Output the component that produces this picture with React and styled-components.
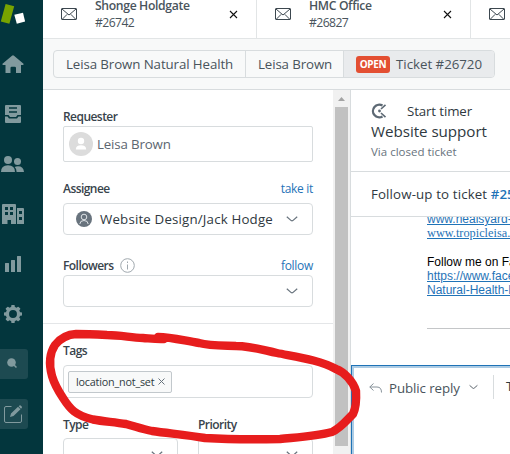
import React from "react";
import styled, { createGlobalStyle } from "styled-components";

const Global = createGlobalStyle`
  * { box-sizing: border-box; }
  html, body { margin: 0; height: 100%; overflow: hidden; background: #fff; }
  body { font-family: "Open Sans", "Noto Sans", sans-serif; color: #2f3941; }
`;

const Screen = styled.div`
  position: relative;
  display: flex;
  width: 510px;
  height: 454px;
  overflow: hidden;
`;

const Text = styled.span`
  display: block;
  flex: none;
  white-space: pre;
  font-size: ${(p) => p.$size || 13.3}px;
  font-weight: ${(p) => p.$weight || 400};
  line-height: ${(p) => p.$line || 20}px;
  letter-spacing: ${(p) => p.$track || 0}px;
  color: ${(p) => p.$color || "#2f3941"};
`;

/* ---------- sidebar ---------- */
const Sidebar = styled.nav`
  flex: none;
  width: 43px;
  background: #03363d;
`;
const NavIcon = styled.svg`
  display: block;
  width: 28px;
  height: 30px;
  margin-top: ${(p) => p.$gap}px;
  fill: #819a9e;
  background: ${(p) => (p.$boxed ? "#1d4a51" : "transparent")};
  border-radius: 0 3px 3px 0;
`;

/* ---------- top ---------- */
const Main = styled.main`
  flex: none;
  width: 467px;
  display: flex;
  flex-direction: column;
`;
const TabBar = styled.div`
  display: flex;
  flex: none;
  height: 39px;
  border-bottom: 1px solid #e2e5e6;
`;
const Tab = styled.div`
  flex: none;
  width: 214px;
  padding: 0 18px;
  display: flex;
  align-items: flex-start;
  border-right: 1px solid #e2e5e6;
`;
const TabLabel = styled.div`
  width: 134px;
  margin: -3px 0 0 18px;
`;
const Envelope = styled.svg`
  flex: none;
  width: 16px;
  height: 12px;
  margin-top: 8px;
  fill: none;
  stroke: #3c474f;
`;
const Close = styled.svg`
  flex: none;
  width: 9px;
  height: 9px;
  margin-top: 10px;
  stroke: #111;
  fill: none;
`;
const CrumbBar = styled.div`
  flex: none;
  height: 51px;
  padding: 11px 10px;
  background: #f8f9f9;
  border-bottom: 1px solid #d8dcde;
`;
const Crumbs = styled.div`
  display: flex;
  width: 442px;
  height: 28px;
  border: 1px solid #d8dcde;
  border-radius: 4px;
  overflow: hidden;
`;
const Crumb = styled.div`
  flex: none;
  display: flex;
  align-items: center;
  width: ${(p) => p.$w}px;
  padding-left: 12px;
  gap: 6px;
  background: ${(p) => (p.$active ? "#e9ebed" : "transparent")};
  border-left: ${(p) => (p.$first ? 0 : 1)}px solid #d8dcde;
`;
const Badge = styled.div`
  display: flex;
  justify-content: center;
  width: 34px;
  height: 17px;
  border-radius: 3px;
  background: #e34f32;
`;

/* ---------- form ---------- */
const Body = styled.div`
  flex: 1;
  display: flex;
  min-height: 0;
`;
const Form = styled.section`
  flex: none;
  width: 290px;
  height: 364px;
  overflow: hidden;
`;
const Group = styled.div`
  padding: ${(p) => p.$top}px 20px ${(p) => p.$bottom || 0}px;
  border-bottom: ${(p) => (p.$rule ? 1 : 0)}px solid #e4e6e8;
`;
const LabelRow = styled.div`
  display: flex;
  height: 20px;
  padding-top: 2px;
  align-items: center;
  margin-top: ${(p) => p.$top || 0}px;
`;
const Link = styled(Text)`
  margin-left: auto;
`;
const Info = styled.svg`
  width: 15px;
  height: 15px;
  margin: -1px 0 0 6px;
  fill: none;
  stroke: #a0a8ae;
`;
const Field = styled.div`
  display: flex;
  align-items: center;
  height: ${(p) => p.$h}px;
  margin-top: ${(p) => p.$top || 0}px;
  padding: 0 ${(p) => p.$right || 14}px 0 ${(p) => p.$left || 5}px;
  border: 1px solid #d8dcde;
  border-radius: ${(p) => p.$radius || 4}px;
`;
const Avatar = styled.svg`
  flex: none;
  width: 24px;
  height: 24px;
  margin-right: 4px;
`;
const Agent = styled.svg`
  flex: none;
  width: 16px;
  height: 16px;
  margin-right: 8px;
`;
const Chevron = styled.svg`
  flex: none;
  width: ${(p) => p.$w || 12}px;
  height: 6px;
  margin-left: auto;
  fill: none;
  stroke: #68737d;
  stroke-width: 1.2;
`;
const Tag = styled.div`
  display: flex;
  align-items: center;
  gap: 4px;
  width: 104px;
  height: 22px;
  margin-left: -1px;
  padding-left: 7px;
  border: 1px solid #c2c8cc;
  border-radius: 2px;
  background: #f8f9f9;
`;
const Remove = styled.svg`
  width: 7px;
  height: 7px;
  stroke: #68737d;
`;
const Pair = styled.div`
  display: grid;
  grid-template-columns: 115px 115px;
  gap: 20px;
  margin-top: 16px;
`;

const Scrollbar = styled.div`
  flex: none;
  display: flex;
  flex-direction: column;
  align-items: center;
  width: 18px;
  padding-right: 1px;
  background: #f1f1f1;
  border-right: 1px solid #d8dcde;
`;
const Arrow = styled.svg`
  width: 7px;
  height: 4px;
  margin: 7px 0 6px;
  fill: #a3a3a3;
`;
const Thumb = styled.div`
  width: 13px;
  height: 339px;
  background: #c1c1c1;
`;

/* ---------- conversation ---------- */
const Conversation = styled.section`
  flex: none;
  width: 159px;
  display: flex;
  flex-direction: column;
  overflow: hidden;
`;
const Heading = styled.header`
  flex: none;
  height: 82px;
  padding: 11px 0 0 20px;
  border-bottom: 1px solid #d8dcde;
`;
const TimerRow = styled.div`
  display: flex;
  align-items: center;
  gap: 20px;
  height: 20px;
`;
const TimerIcon = styled.svg`
  width: 16px;
  height: 16px;
  fill: none;
  stroke: #5d6974;
`;
const FollowUp = styled.div`
  flex: none;
  display: flex;
  height: 45px;
  padding: 12px 0 0 20px;
  border-bottom: 1px solid #d8dcde;
`;
const Message = styled.div`
  flex: none;
  height: 148px;
  padding-left: 76px;
  overflow: hidden;
`;
const Line = styled.div`
  height: 14px;
  margin-top: ${(p) => p.$top || 0}px;
  line-height: 14px;
  font-size: ${(p) => p.$size || 12}px;
  font-family: ${(p) => (p.$serif ? '"Liberation Serif", serif' : '"Liberation Sans", sans-serif')};
  white-space: nowrap;
  color: ${(p) => (p.$link ? "#1f73b7" : "#000")};
  text-decoration: ${(p) => (p.$link ? "underline" : "none")};
`;
const Rule = styled.div`
  height: 1px;
  margin-top: 31px;
  background: #c4c6c8;
`;
const Composer = styled.div`
  flex: none;
  display: flex;
  align-items: flex-start;
  width: 180px;
  height: 110px;
  padding: 9px 0 0 17px;
  border: 1px solid #1f73b7;
  box-shadow: inset 0 0 0 2px #adcce4;
`;
const Reply = styled.svg`
  width: 13px;
  height: 10px;
  margin: 8px 7px 0 0;
  fill: none;
  stroke: #87929a;
`;
const ReplyChevron = styled(Chevron)`
  margin: 9px 0 0 9px;
  stroke: #49545c;
`;
const Divider = styled.div`
  width: 1px;
  height: 24px;
  margin: 0 12px 0 15px;
  background: #d8dcde;
`;

const Annotation = styled.svg`
  position: absolute;
  inset: 0;
  width: 510px;
  height: 454px;
  fill: none;
  stroke: #e71d1d;
  stroke-width: 8.4;
  stroke-linecap: round;
  stroke-linejoin: round;
  pointer-events: none;
`;

const Mail = () => (
  <Envelope viewBox="0 0 16 12">
    <rect x=".5" y=".5" width="15" height="11" rx=".5" />
    <path d="M1 1l7 6 7-6M1.5 11l4.7-4.7M14.5 11L9.8 6.3" />
  </Envelope>
);
const Cross = () => (
  <Close viewBox="0 0 9 9">
    <path d="M1 1l7 7M8 1L1 8" strokeWidth="1.1" />
  </Close>
);
const Down = ({ w = 12 }) => (
  <Chevron $w={w} viewBox="0 0 12 6">
    <path d="M.8 .8L5.2 4.6Q6 5.2 6.8 4.6L11.2 .8" />
  </Chevron>
);
const Label = ({ children }) => (
  <Text $size={12} $weight={600} $track={-0.55} $color="#38434b">{children}</Text>
);
const teeth = [0, 45, 90, 135, 180, 225, 270, 315];

export default function App() {
  return (
    <Screen>
      <Global />
      <Sidebar>
        <NavIcon $gap={0} viewBox="0 0 28 30">
          <path fill="#78a300" d="M5.6 4L14.2 6.2 9.4 23.7.8 21.5z" />
          <path fill="#fff" d="M14.3 14.7L23 12.8 25.1 21.5 16.8 23.8z" />
        </NavIcon>
        <NavIcon $gap={19} viewBox="0 0 28 30">
          <path d="M12 6.7Q13 5.7 14 6.7L23.5 14.7Q24 15.8 23 16H21V24H16V19Q16 17.7 14.7 17.7H11.7Q10.5 17.7 10.5 19V24H5.5V16H3Q2 15.7 2.5 14.7z" />
        </NavIcon>
        <NavIcon $gap={20} viewBox="0 0 28 30">
          <path fillRule="evenodd" d="M6 6H20Q21 6 21 7V16H17.5L16 18H10L8.500 16H5V7Q5 6 6 6zM9 8.200V9.800H17V8.200zM9 12.200V13.800H17V12.200z" />
          <path d="M5 17.500H7.500L9 19.500H17L18.500 17.500H21V23Q21 24 20 24H6Q5 24 5 23z" />
        </NavIcon>
        <NavIcon $gap={20} viewBox="0 0 28 30">
          <circle cx="8" cy="11" r="4" />
          <circle cx="17.500" cy="12.600" r="3.500" />
          <path d="M1 23Q1 16.300 8 16.300T15 23zM16.600 23Q16.500 19.500 14.700 18Q16 17.200 18 17.200Q23.500 17.200 24 23z" />
        </NavIcon>
        <NavIcon $gap={20} viewBox="0 0 28 30">
          <path fillRule="evenodd" d="M3 5H15Q16 5 16 6V25H11V21H7.500V25H2V6Q2 5 3 5zM5 8v3h3V8zM10 8v3h3V8zM5 13v3h3v-3zM10 13v3h3v-3zM17 9H23Q24 9 24 10V25H17zM19 12v3h3v-3zM19 18v3h3v-3z" />
        </NavIcon>
        <NavIcon $gap={20} viewBox="0 0 28 30">
          <path d="M5 14.500q0-.500.500-.500h3q.500 0 .500.500V23H5zM11 11.500q0-.500.500-.500h3q.500 0 .500.500V23H11zM17 7.500q0-.500.500-.500h3q.500 0 .500.500V23H17z" />
        </NavIcon>
        <NavIcon $gap={20} viewBox="0 0 28 30">
          <circle cx="13" cy="15" r="5.600" fill="none" stroke="#819a9e" strokeWidth="3.300" />
          {teeth.map((a) => (
            <rect key={a} x="11.200" y="6" width="3.600" height="3.200" rx=".8" transform={`rotate(${a} 13 15)`} />
          ))}
        </NavIcon>
        <NavIcon $gap={20} $boxed viewBox="0 0 28 30">
          <circle cx="11.500" cy="13.500" r="4.300" />
          <path d="M14 16L16.500 18.500" stroke="#819a9e" strokeWidth="1.500" />
        </NavIcon>
        <NavIcon $gap={20} $boxed viewBox="0 0 28 30">
          <path d="M11.500 7.500H6Q4.500 7.500 4.500 9V22Q4.500 23.500 6 23.500H20Q21.500 23.500 21.500 22V15.500" fill="none" stroke="#819a9e" />
          <path d="M10 18L11 14.500 18 7.800 20.500 10.300 13.500 17zM18.700 7.200L19.500 6.500Q20.200 6 21 6.800L21.700 7.500Q22.300 8.200 21.700 9L21 9.700z" />
        </NavIcon>
      </Sidebar>

      <Main>
        <TabBar>
          <Tab>
            <Mail />
            <TabLabel>
              <Text $size={12.2} $weight={600} $line={18} $track={-0.35} $color="#49545c">Shonge Holdgate</Text>
              <Text $size={12.2} $line={16} $track={-0.6} $color="#49545c">#26742</Text>
            </TabLabel>
            <Cross />
          </Tab>
          <Tab>
            <Mail />
            <TabLabel>
              <Text $size={12.2} $weight={600} $line={18} $track={-0.35} $color="#49545c">HMC Office</Text>
              <Text $size={12.2} $line={16} $track={-0.6} $color="#49545c">#26827</Text>
            </TabLabel>
            <Cross />
          </Tab>
          <Tab>
            <Mail />
          </Tab>
        </TabBar>
        <CrumbBar>
          <Crumbs>
            <Crumb $first $w={191}>
              <Text $track={-0.1} $color="#49545c">Leisa Brown Natural Health</Text>
            </Crumb>
            <Crumb $w={98}>
              <Text $track={-0.12} $color="#49545c">Leisa Brown</Text>
            </Crumb>
            <Crumb $active $w={153}>
              <Badge>
                <Text $size={10} $weight={700} $line={17} $track={-0.4} $color="#fff">OPEN</Text>
              </Badge>
              <Text $track={-0.02} $color="#49545c">Ticket #26720</Text>
            </Crumb>
          </Crumbs>
        </CrumbBar>

        <Body>
          <Form>
            <Group $rule $top={16} $bottom={16}>
              <LabelRow>
                <Label>Requester</Label>
              </LabelRow>
              <Field $h={36} $radius={2}>
                <Avatar viewBox="0 0 24 24">
                  <circle cx="12" cy="12" r="12" fill="#dcdcdc" />
                  <circle cx="12" cy="9" r="3.200" fill="#fff" />
                  <path d="M6.800 17.500Q7 13.300 12 13.300T17.200 17.500z" fill="#fff" />
                </Avatar>
                <Text $line={22} $track={-0.15} $color="#5c6670">Leisa Brown</Text>
              </Field>
              <LabelRow $top={16}>
                <Label>Assignee</Label>
                <Link $size={12} $track={-0.3} $color="#1f73b7">take it</Link>
              </LabelRow>
              <Field $h={32} $top={5} $left={12}>
                <Agent viewBox="0 0 16 16" fill="none" stroke="#dfe3e6">
                  <circle cx="8" cy="8" r="8" fill="#68737d" stroke="none" />
                  <circle cx="8" cy="6" r="2.800" />
                  <path d="M3.800 13Q4 9.500 8 9.500T12.200 13" />
                </Agent>
                <Text $track={0.17}>Website Design/Jack Hodge</Text>
                <Down />
              </Field>
              <LabelRow $top={20}>
                <Label>Followers</Label>
                <Info viewBox="0 0 15 15">
                  <circle cx="7.500" cy="7.500" r="6.800" />
                  <path d="M7.500 6.500V11.500M7.500 3.500V5" />
                </Info>
                <Link $size={12} $track={-0.3} $color="#1f73b7">follow</Link>
              </LabelRow>
              <Field $h={32}>
                <Down />
              </Field>
            </Group>
            <Group $top={16}>
              <LabelRow>
                <Label>Tags</Label>
              </LabelRow>
              <Field $h={33} $top={5}>
                <Tag>
                  <Text $size={10.8} $track={-0.2}>location_not_set</Text>
                  <Remove viewBox="0 0 7 7">
                    <path d="M.5 .5l6 6M6.500 .5l-6 6" />
                  </Remove>
                </Tag>
              </Field>
              <Pair>
                <div>
                  <LabelRow>
                    <Label>Type</Label>
                  </LabelRow>
                  <Field $h={32} $top={4}>
                    <Down />
                  </Field>
                </div>
                <div>
                  <LabelRow>
                    <Label>Priority</Label>
                  </LabelRow>
                  <Field $h={32} $top={4}>
                    <Down />
                  </Field>
                </div>
              </Pair>
            </Group>
          </Form>

          <Scrollbar>
            <Arrow viewBox="0 0 7 4">
              <path d="M3.500 0L7 4H0z" />
            </Arrow>
            <Thumb />
          </Scrollbar>

          <Conversation>
            <Heading>
              <TimerRow>
                <TimerIcon viewBox="0 0 16 16">
                  <path d="M11.500 2.600A6.300 6.300 0 1 0 11.500 13.400" strokeWidth="2.300" />
                  <path d="M10 6L14.500 1.800M10 10L14.500 14.200" strokeWidth="1.600" />
                  <circle cx="8.500" cy="8" r="1.400" fill="#5d6974" stroke="none" />
                </TimerIcon>
                <Text $track={-0.12}>Start timer</Text>
              </TimerRow>
              <Text $size={15.2} $line={20} $track={-0.05}>Website support</Text>
              <Text $size={11.500} $line={21} $track={0} $color="#68737d">Via closed ticket</Text>
            </Heading>
            <FollowUp>
              <Text $track={0.13}>Follow-up to ticket </Text>
              <Text $weight={600} $color="#1f73b7">#25</Text>
            </FollowUp>
            <Message>
              <Line $link $top={-5}>www.healsyard-</Line>
              <Line $link $serif $size={12.3}>www.tropicleisa.co</Line>
              <Line $top={15}>Follow me on Fac</Line>
              <Line $link>https://www.faceb</Line>
              <Line $link>Natural-Health-L</Line>
              <Rule />
            </Message>
            <Composer>
              <Reply viewBox="0 0 13 10">
                <path d="M4.500 .5L.8 4 4.500 7.500M.8 4H8Q12.500 4 12.500 9.500" />
              </Reply>
              <Text $line={26} $track={-0.08} $color="#49545c">Public reply</Text>
              <ReplyChevron $w={9} viewBox="0 0 12 6">
                <path d="M.8 .8L5.200 4.600Q6 5.200 6.800 4.600L11.200 .8" />
              </ReplyChevron>
              <Divider />
              <Text $line={23}>T</Text>
            </Composer>
          </Conversation>
        </Body>
      </Main>

      <Annotation viewBox="0 0 510 454">
        <path d="M164 339C158 339.500 150 338.500 143 338C130 337.500 121 335 107 335C97 334.500 87 334 76 334C66 334.500 59 340 55 345C49 354 49 365 52 376C55 386 59 392 63 398C70 409 75 415 93 419.500C104 421.500 114 422 126 424C137 427 142 429 152 431C170 433.500 187 435 205 438C230 439.500 255 439.500 280 439C300 437 317 436 332 432C341 428 346 421 353 414C356 408 356.500 400 356 391C353 381 344 372 336 369C320 360 297 357 277 353C259 349 250 346 236 346C224 345.500 210 346 199 343C185 341 172 337 158 337" />
      </Annotation>
    </Screen>
  );
}
